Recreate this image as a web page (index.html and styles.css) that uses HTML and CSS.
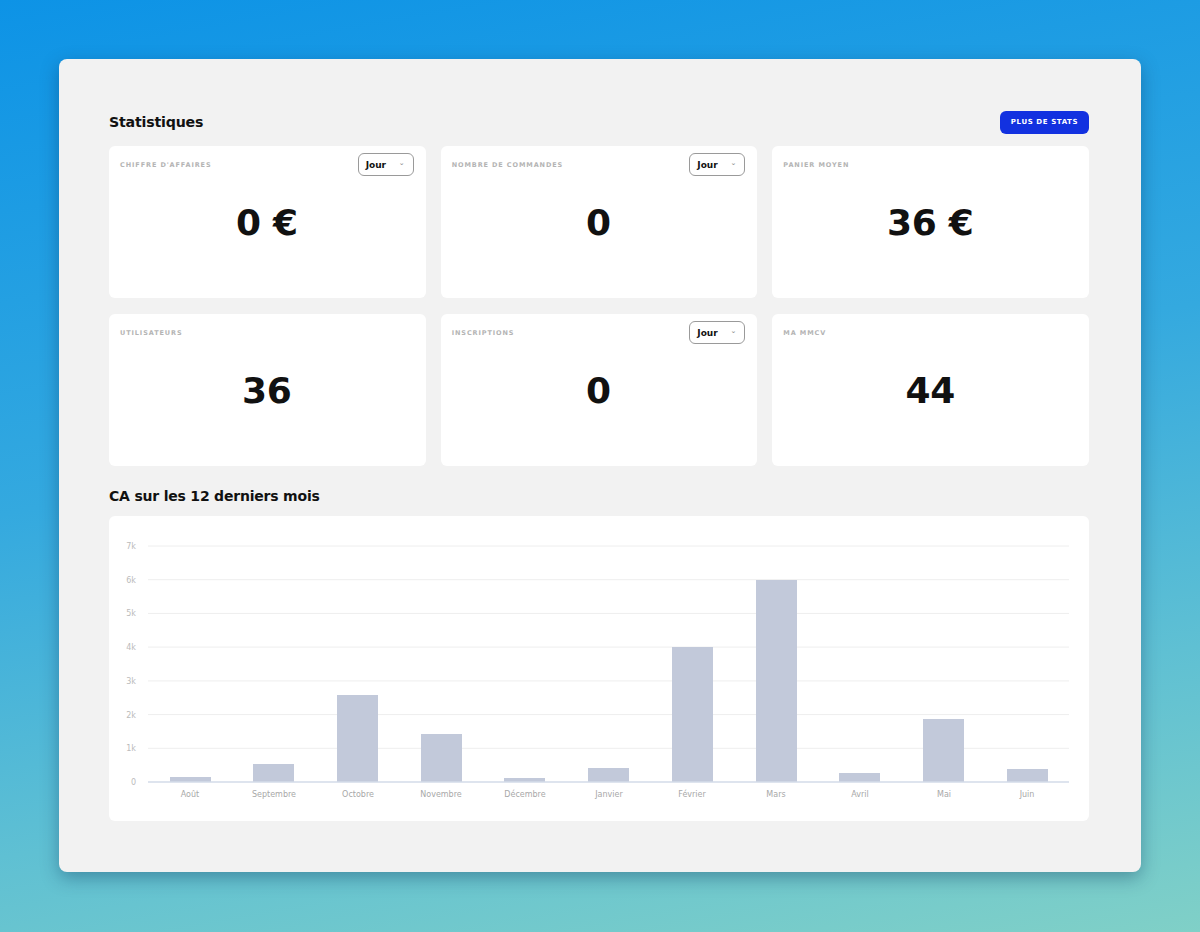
FILE: index.html
```html
<!DOCTYPE html>
<html lang="fr">
<head>
    <meta charset="UTF-8">
    <meta name="viewport" content="width=device-width, initial-scale=1.0">
    <title>Statistiques</title>
    <link rel="stylesheet" href="styles.css">
</head>
<body>
    <div class="window">
        <div class="section-head">
            <h2>Statistiques</h2>
            <button class="btn-stats">PLUS DE STATS</button>
        </div>

        <div class="cards">
            <div class="card">
                <div class="card-top">
                    <span class="card-label">Chiffre d'affaires</span>
                    <div class="select">Jour <span class="caret">&#8964;</span></div>
                </div>
                <div class="card-value">0 €</div>
            </div>
            <div class="card">
                <div class="card-top">
                    <span class="card-label">Nombre de commandes</span>
                    <div class="select">Jour <span class="caret">&#8964;</span></div>
                </div>
                <div class="card-value">0</div>
            </div>
            <div class="card">
                <div class="card-top">
                    <span class="card-label">Panier moyen</span>
                </div>
                <div class="card-value">36 €</div>
            </div>
            <div class="card">
                <div class="card-top">
                    <span class="card-label">Utilisateurs</span>
                </div>
                <div class="card-value">36</div>
            </div>
            <div class="card">
                <div class="card-top">
                    <span class="card-label">Inscriptions</span>
                    <div class="select">Jour <span class="caret">&#8964;</span></div>
                </div>
                <div class="card-value">0</div>
            </div>
            <div class="card">
                <div class="card-top">
                    <span class="card-label">Ma MMCV</span>
                </div>
                <div class="card-value">44</div>
            </div>
        </div>

        <h2 class="chart-title">CA sur les 12 derniers mois</h2>
        <div class="chart-card">
            <svg class="chart" width="980" height="305" viewBox="0 0 980 305">
                <g class="grid">
                    <line x1="39" y1="30" x2="960" y2="30"/>
                    <line x1="39" y1="63.7" x2="960" y2="63.7"/>
                    <line x1="39" y1="97.4" x2="960" y2="97.4"/>
                    <line x1="39" y1="131.1" x2="960" y2="131.1"/>
                    <line x1="39" y1="164.9" x2="960" y2="164.9"/>
                    <line x1="39" y1="198.6" x2="960" y2="198.6"/>
                    <line x1="39" y1="232.3" x2="960" y2="232.3"/>
                </g>
                <g class="y-labels">
                    <text x="27" y="33">7k</text>
                    <text x="27" y="66.7">6k</text>
                    <text x="27" y="100.4">5k</text>
                    <text x="27" y="134.1">4k</text>
                    <text x="27" y="167.9">3k</text>
                    <text x="27" y="201.6">2k</text>
                    <text x="27" y="235.3">1k</text>
                    <text x="27" y="269">0</text>
                </g>
                <g class="bars">
                    <rect x="61" y="261" width="41" height="5"/>
                    <rect x="144" y="248" width="41" height="18"/>
                    <rect x="228" y="179" width="41" height="87"/>
                    <rect x="312" y="218" width="41" height="48"/>
                    <rect x="395" y="262" width="41" height="4"/>
                    <rect x="479" y="252" width="41" height="14"/>
                    <rect x="563" y="131" width="41" height="135"/>
                    <rect x="647" y="64" width="41" height="202"/>
                    <rect x="730" y="257" width="41" height="9"/>
                    <rect x="814" y="203" width="41" height="63"/>
                    <rect x="898" y="253" width="41" height="13"/>
                </g>
                <line class="baseline" x1="39" y1="266" x2="960" y2="266"/>
                <g class="x-labels">
                    <text x="81" y="281">Août</text>
                    <text x="165" y="281">Septembre</text>
                    <text x="249" y="281">Octobre</text>
                    <text x="332" y="281">Novembre</text>
                    <text x="416" y="281">Décembre</text>
                    <text x="500" y="281">Janvier</text>
                    <text x="583" y="281">Février</text>
                    <text x="667" y="281">Mars</text>
                    <text x="751" y="281">Avril</text>
                    <text x="835" y="281">Mai</text>
                    <text x="918" y="281">Juin</text>
                </g>
            </svg>
        </div>
    </div>
</body>
</html>
```

FILE: styles.css
```css
* {
    box-sizing: border-box;
}
html, body {
    height: 100%;
}
body {
    margin: 0;
    background: linear-gradient(170deg, #0d93e6 0%, #34a9df 45%, #5fc0d3 75%, #80d0c7 100%);
    font-family: "DejaVu Sans", "Open Sans", sans-serif;
    color: #111;
    overflow: hidden;
}
.window {
    width: 1082px;
    height: 813px;
    margin: 59px auto 0;
    padding: 52px 52px 0 50px;
    background: #f2f2f2;
    border-radius: 8px;
    box-shadow: 0 6px 18px rgba(0, 40, 80, 0.35);
}
.section-head {
    display: flex;
    justify-content: space-between;
    align-items: center;
    height: 22px;
}
h2 {
    margin: 0;
    font-size: 14.2px;
    font-weight: bold;
    line-height: 16px;
    letter-spacing: -0.2px;
}
.btn-stats {
    background: #1231e0;
    color: #fff;
    border: none;
    border-radius: 6px;
    height: 23px;
    width: 89px;
    padding: 0;
    font-family: inherit;
    font-size: 7px;
    font-weight: bold;
    letter-spacing: 0.6px;
}
.cards {
    display: grid;
    grid-template-columns: repeat(3, 1fr);
    gap: 16px 15px;
    margin-top: 13px;
}
.card {
    background: #fff;
    border-radius: 6px;
    height: 152px;
    padding: 7px 12px 0 11px;
}
.card-top {
    display: flex;
    justify-content: space-between;
    align-items: center;
    height: 23px;
}
.card-label {
    text-transform: uppercase;
    font-size: 6.5px;
    font-weight: bold;
    letter-spacing: 0.9px;
    color: #b4b4b4;
}
.select {
    width: 56px;
    height: 23px;
    border: 1px solid #9a9a9a;
    border-radius: 6px;
    display: flex;
    align-items: center;
    justify-content: space-between;
    padding: 0 8px 0 7px;
    font-size: 9px;
    font-weight: bold;
    color: #111;
}
.caret {
    font-size: 7px;
    color: #999;
    line-height: 1;
    margin-top: -3px;
}
.card-value {
    text-align: center;
    font-size: 36px;
    font-weight: bold;
    line-height: 40px;
    margin-top: 27px;
    letter-spacing: -0.3px;
}
.chart-title {
    margin-top: 22px;
    font-size: 14px;
}
.chart-card {
    background: #fff;
    border-radius: 6px;
    height: 305px;
    margin-top: 12px;
}
.chart {
    display: block;
}
.grid line {
    stroke: #eeeeee;
    stroke-width: 1;
}
.baseline {
    stroke: #d3dbe8;
    stroke-width: 1.5;
}
.bars rect {
    fill: #c2c9da;
}
.chart text {
    font-family: "DejaVu Sans", sans-serif;
    font-size: 8px;
    fill: #a8a8a8;
}
.y-labels text {
    text-anchor: end;
    fill: #bbbbbb;
}
.x-labels text {
    text-anchor: middle;
}
```
